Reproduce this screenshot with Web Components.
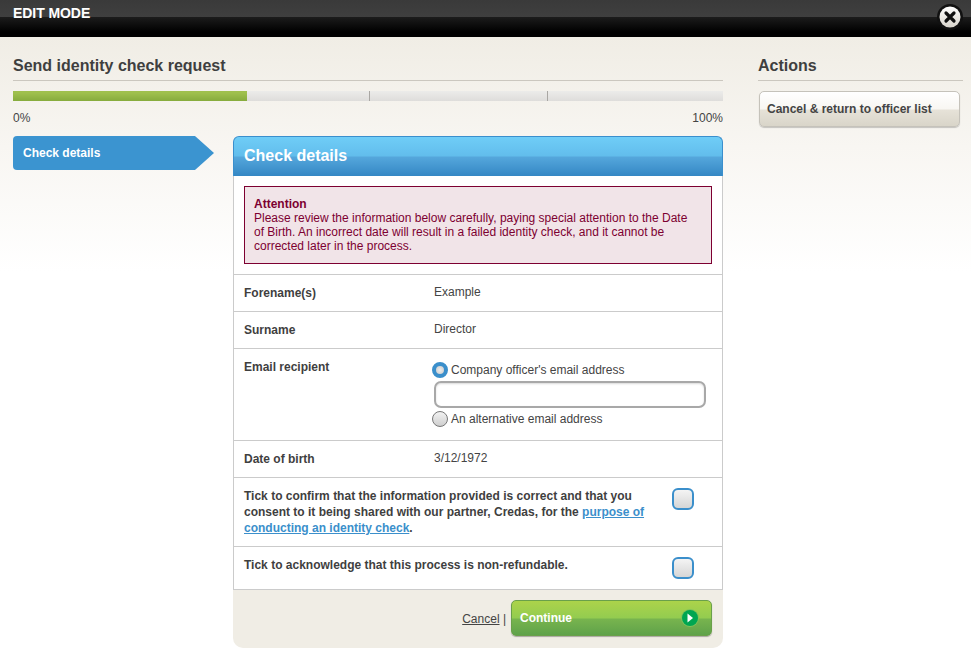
<!DOCTYPE html>
<html lang="en">
<head>
<meta charset="UTF-8">
<title>Send identity check request</title>
<style>
  html, body { margin:0; padding:0; }
  body {
    height:672px; overflow:hidden;
    font-family:"Liberation Sans", Arial, sans-serif; font-size:12px; color:#3f3f3f;
    background:#fff;
  }
</style>
</head>
<body>
<template id="tmpl-edit-bar">
  <style>
    :host { display:block; height:37px; position:relative;
      background:linear-gradient(#3a3a3a 0, #3f3f3f 17px, #1c1c1c 17px, #000 32px); }
    .label { padding:6px 0 0 13px; font-size:14px; font-weight:bold; line-height:15px; color:#fff; letter-spacing:-.07px; }
    svg { position:absolute; left:937px; top:4px; }
  </style>
  <div class="label"><slot></slot></div>
  <svg width="26" height="26" viewBox="0 0 26 26">
    <defs><linearGradient id="c" x1="0" y1="0" x2="0" y2="1"><stop offset="0" stop-color="#fff"/><stop offset="1" stop-color="#d8d4cc"/></linearGradient></defs>
    <circle cx="13" cy="13" r="13" fill="#111"/>
    <circle cx="13" cy="13" r="10.5" fill="url(#c)"/>
    <path d="M9 9l8 8M17 9l-8 8" stroke="#111" stroke-width="3.2" stroke-linecap="round"/>
  </svg>
</template>

<template id="tmpl-section-title">
  <style>
    :host { display:block; border-bottom:1px solid #cbc7bf; height:43px; box-sizing:content-box; }
    h2 { margin:0; padding-top:19px; font-size:16px; line-height:19px; font-weight:bold; color:#3f3f3f; }
  </style>
  <h2><slot></slot></h2>
</template>

<template id="tmpl-progress-bar">
  <style>
    :host { display:block; margin-top:10px; }
    .track { height:10px; display:flex; background:linear-gradient(#ececea,#dedddb); position:relative; }
    .fill { width:234px; background:linear-gradient(#9fc04d 0,#9fc04d 2px,#86ab3d 100%); }
    .tick { position:absolute; top:0; bottom:0; width:1px; background:#a9a7a3; }
    .ends { display:flex; justify-content:space-between; margin-top:10px; line-height:14px; color:#444; }
  </style>
  <div class="track">
    <div class="fill"></div>
    <div class="tick" style="left:356px"></div>
    <div class="tick" style="left:534px"></div>
  </div>
  <div class="ends"><span>0%</span><span>100%</span></div>
</template>

<template id="tmpl-step-tab">
  <style>
    :host { display:block; width:201px; height:34px; position:relative; }
    svg { position:absolute; left:0; top:0; }
    span { position:relative; display:block; padding:10px 0 0 10px; font-size:12px; line-height:15px; font-weight:bold; color:#fff; }
  </style>
  <svg width="201" height="34" viewBox="0 0 201 34"><path d="M4 0H182L201 17L182 34H4Q0 34 0 30V4Q0 0 4 0Z" fill="#3b94d0"/></svg>
  <span><slot></slot></span>
</template>

<template id="tmpl-check-panel">
  <style>
    :host { display:block; width:490px; }
    header { height:40px; box-sizing:border-box; border:1px solid #3a8fcd; border-bottom:0; border-radius:6px 6px 0 0;
      background:linear-gradient(#6fcdf7 0,#62bdec 19px,#55a7dc 20px,#3487c4 100%);
      padding:9px 0 0 10px; font-size:16px; line-height:20px; font-weight:bold; color:#fff; }
    .body { display:flow-root; background:#fff; border:1px solid #cbcbcb; border-top:0; }
    footer { height:58px; box-sizing:border-box; background:#f0ede5; border-radius:0 0 10px 10px; padding:10px 11px 0 0;
      display:flex; justify-content:flex-end; }
  </style>
  <header><slot name="title"></slot></header>
  <div class="body"><slot></slot></div>
  <footer><slot name="footer"></slot></footer>
</template>

<template id="tmpl-alert-box">
  <style>
    :host { display:block; margin:10px 10px 10px 10px; box-sizing:border-box; height:78px; padding:10px 18px 0 9px;
      border:1px solid #7d0031; background:#f1e4e8; color:#7d0031; font-size:12px; line-height:14px; }
    b { display:block; }
  </style>
  <b><slot name="title"></slot></b>
  <slot></slot>
</template>

<template id="tmpl-form-row">
  <style>
    :host { display:flex; box-sizing:border-box; border-top:1px solid #cbcbcb; padding:10px 10px 0; }
    .label { width:190px; flex:none; font-weight:bold; line-height:15px; padding-top:1px; color:#3f3f3f; }
    .value { flex:1; line-height:14px; color:#444; }
  </style>
  <div class="label"><slot name="label"></slot></div>
  <div class="value"><slot></slot></div>
</template>

<template id="tmpl-tick-row">
  <style>
    :host { display:flex; box-sizing:border-box; border-top:1px solid #cbcbcb; padding:10px 28px 0 10px; justify-content:space-between; }
    .text { font-weight:bold; line-height:16px; color:#3f3f3f; }
    .box { flex:none; width:22px; height:22px; box-sizing:border-box; border:2px solid #3b8fcb; border-radius:6px;
      background:linear-gradient(#f4f4f4,#d6d6d6); }
  </style>
  <div class="text"><slot></slot></div>
  <div class="box"></div>
</template>

<template id="tmpl-radio-option">
  <style>
    :host { display:flex; align-items:center; height:16px; line-height:14px; color:#444; }
    .dot { flex:none; width:16px; height:16px; box-sizing:border-box; border-radius:50%; margin:0 3px 0 -2px;
      border:1px solid #777; background:linear-gradient(#f2f2f2,#cfcfcf); }
    :host([checked]) .dot { border:4px solid #3b8fcb; background:radial-gradient(circle,#eee 0,#c9c9c9 100%); }
  </style>
  <div class="dot"></div><slot></slot>
</template>

<template id="tmpl-text-box">
  <style>
    :host { display:block; width:272px; height:27px; box-sizing:border-box; margin:3px 0;
      border:2px solid #a8a8a8; border-radius:7px; background:#fff; box-shadow:inset 0 1px 2px rgba(0,0,0,.15); }
  </style>
</template>

<template id="tmpl-green-button">
  <style>
    :host { display:flex; align-items:center; justify-content:space-between; width:201px; height:36px; box-sizing:border-box;
      padding:0 12px 0 8px; border:1px solid #6aa04a; border-radius:5px; cursor:pointer;
      background:linear-gradient(#acd34a 0,#93cc50 17px,#78b44e 18px,#5fa24a 100%);
      box-shadow:0 1px 1px rgba(0,0,0,.3);
      font-size:12px; font-weight:bold; color:#fff; }
  </style>
  <slot></slot>
  <svg width="18" height="18" viewBox="0 0 18 18">
    <circle cx="9" cy="9" r="9" fill="#7fc25a"/>
    <circle cx="9" cy="9" r="8" fill="#00a651"/>
    <path d="M6.5 4.5L12 9L6.5 13.5Z" fill="#fff"/>
  </svg>
</template>

<template id="tmpl-action-button">
  <style>
    :host { display:block; width:201px; height:36px; margin-left:1px; box-sizing:border-box; padding:0 7px; border:1px solid #c5c2ba; border-radius:5px;
      line-height:35px; font-size:12px; font-weight:bold; color:#444;
      background:linear-gradient(#fff 0,#f8f6f2 17px,#e6e2d8 18px,#d9d5c9 100%);
      box-shadow:0 1px 1px rgba(0,0,0,.2); }
  </style>
  <slot></slot>
</template>

<template id="tmpl-edit-page">
  <style>
    :host { display:block; height:635px;
      background:linear-gradient(#f0ede5 0,#f8f6f2 110px,#fff 235px); }
    .cols { display:flex; padding:0 8px 0 13px; }
    .main { width:710px; flex:none; }
    .side { width:205px; margin-left:35px; }
    .flow { display:flex; gap:19px; margin-top:11px; }
    .actions { margin-top:10px; }
  </style>
  <div class="cols">
    <div class="main">
      <slot name="title"></slot>
      <slot name="progress"></slot>
      <div class="flow"><slot name="step"></slot><slot name="panel"></slot></div>
    </div>
    <div class="side">
      <slot name="side-title"></slot>
      <div class="actions"><slot name="actions"></slot></div>
    </div>
  </div>
</template>

<edit-bar>EDIT MODE</edit-bar>
<edit-page>
  <section-title slot="title">Send identity check request</section-title>
  <progress-bar slot="progress"></progress-bar>
  <step-tab slot="step">Check details</step-tab>
  <check-panel slot="panel">
    <span slot="title">Check details</span>
    <alert-box>
      <span slot="title">Attention</span>
      Please review the information below carefully, paying special attention to the Date of Birth. An incorrect date will result in a failed identity check, and it cannot be corrected later in the process.
    </alert-box>
    <form-row style="height:37px"><span slot="label">Forename(s)</span>Example</form-row>
    <form-row style="height:37px"><span slot="label">Surname</span>Director</form-row>
    <form-row style="height:92px">
      <span slot="label">Email recipient</span>
      <radio-option checked style="margin-top:3px">Company officer's email address</radio-option>
      <text-box></text-box>
      <radio-option>An alternative email address</radio-option>
    </form-row>
    <form-row style="height:37px"><span slot="label">Date of birth</span>3/12/1972</form-row>
    <tick-row style="height:69px">
      <div>Tick to confirm that the information provided is correct and that you</div>
      <div>consent to it being shared with our partner, Credas, for the <a href="#" style="color:#3b8fcb">purpose of</a></div>
      <div><a href="#" style="color:#3b8fcb">conducting an identity check</a>.</div>
    </tick-row>
    <tick-row style="height:43px">Tick to acknowledge that this process is non-refundable.</tick-row>
    <span slot="footer" style="line-height:38px;margin-right:5px;color:#444"><a href="#" style="color:#444">Cancel</a> |</span>
    <green-button slot="footer">Continue</green-button>
  </check-panel>
  <section-title slot="side-title">Actions</section-title>
  <action-button slot="actions">Cancel &amp; return to officer list</action-button>
</edit-page>

<script>
  // every element just clones its template into an open shadow root
  const names = ['edit-bar', 'section-title', 'progress-bar', 'step-tab', 'check-panel', 'alert-box',
    'form-row', 'tick-row', 'radio-option', 'text-box', 'green-button', 'action-button', 'edit-page'];
  for (const name of names) {
    customElements.define(name, class extends HTMLElement {
      constructor() {
        super();
        const tmpl = document.getElementById('tmpl-' + name);
        this.attachShadow({ mode: 'open' }).appendChild(tmpl.content.cloneNode(true));
      }
    });
  }
</script>
</body>
</html>
